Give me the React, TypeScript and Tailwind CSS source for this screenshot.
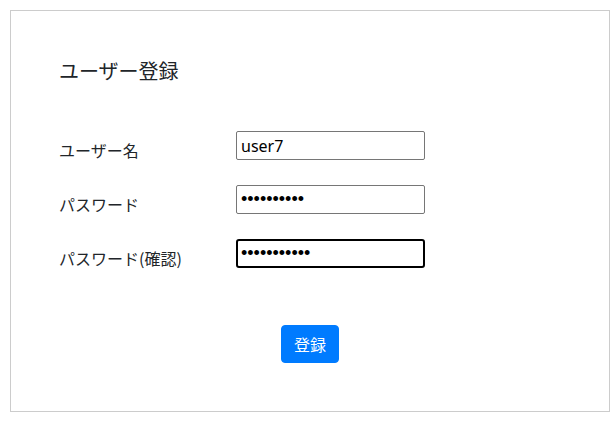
import React from "react";

export default function App() {
  const font = { fontFamily: '"Noto Sans CJK JP", "Noto Sans", sans-serif' };
  return (
    <div className="w-[616px] h-[421px] bg-white p-[10px]" style={font}>
      <div className="w-[600px] h-[402px] border border-[#cccccc] pl-[48px] pt-[45px] text-[#212529]">
        <h1 className="text-[20px] leading-[30px] font-normal">ユーザー登録</h1>
        <div className="mt-[45px] flex flex-col gap-[25px]">
          <div className="flex items-center h-[29px]">
            <label className="w-[177px] text-[16px] leading-[24px] pt-[8px]">ユーザー名</label>
            <input
              type="text"
              defaultValue="user7"
              className="w-[189px] h-[29px] border border-[#767676] rounded-[2px] px-[4px] text-[16px] text-black outline-none"
              style={{ fontFamily: '"Noto Sans", sans-serif' }}
            />
          </div>
          <div className="flex items-center h-[29px]">
            <label className="w-[177px] text-[16px] leading-[24px] pt-[8px]">パスワード</label>
            <input
              type="password"
              defaultValue="abcdefghij"
              className="w-[189px] h-[29px] border border-[#767676] rounded-[2px] px-[4px] text-[18px] text-black outline-none"
              style={{ fontFamily: '"Liberation Sans", sans-serif' }}
            />
          </div>
          <div className="flex items-center h-[29px]">
            <label className="w-[177px] text-[16px] leading-[24px] pt-[8px]">パスワード(確認)</label>
            <input
              type="password"
              defaultValue="abcdefghijk"
              className="w-[189px] h-[29px] border-2 border-black rounded-[3px] px-[3px] text-[18px] text-black outline-none"
              style={{ fontFamily: '"Liberation Sans", sans-serif' }}
            />
          </div>
        </div>
        <div className="mt-[57px] flex justify-center pr-[48px]">
          <button className="h-[38px] px-[12px] rounded-[4px] bg-[#007bff] border border-[#007bff] text-white text-[16px] leading-[24px]">
            登録
          </button>
        </div>
      </div>
    </div>
  );
}
